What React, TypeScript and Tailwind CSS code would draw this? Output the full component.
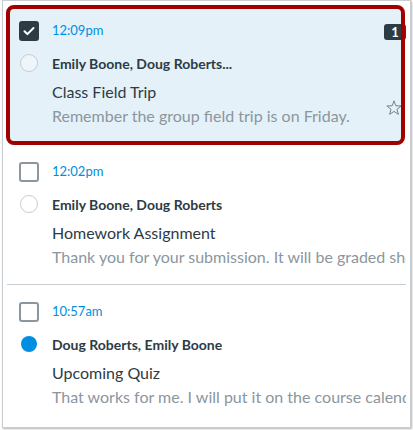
import React from "react";

type Msg = {
  time: string;
  names: string;
  subject: string;
  preview: string;
  checked?: boolean;
  unread?: boolean;
};

const messages: Msg[] = [
  {
    time: "12:09pm",
    names: "Emily Boone, Doug Roberts...",
    subject: "Class Field Trip",
    preview: "Remember the group field trip is on Friday.",
    checked: true,
  },
  {
    time: "12:02pm",
    names: "Emily Boone, Doug Roberts",
    subject: "Homework Assignment",
    preview: "Thank you for your submission. It will be graded shortly.",
  },
  {
    time: "10:57am",
    names: "Doug Roberts, Emily Boone",
    subject: "Upcoming Quiz",
    preview: "That works for me. I will put it on the course calendar.",
    unread: true,
  },
];

function Checkbox({ checked }: { checked?: boolean }) {
  if (checked) {
    return (
      <div className="w-[20px] h-[20px] rounded-[3px] bg-[#2d3b45] flex items-center justify-center">
        <svg width="14" height="14" viewBox="0 0 14 14">
          <path d="M2.5 7.2l2.9 2.9L11.5 4" fill="none" stroke="white" strokeWidth="2" strokeLinecap="round" strokeLinejoin="round" />
        </svg>
      </div>
    );
  }
  return <div className="w-[20px] h-[20px] rounded-[3px] border-2 border-[#8b969e] bg-white" />;
}

function Star() {
  return (
    <svg width="16" height="16" viewBox="0 0 16 16">
      <polygon
        points="8,0.8 9.82,5.79 15.13,5.98 10.95,9.26 12.41,14.37 8,11.4 3.59,14.37 5.05,9.26 0.87,5.98 6.18,5.79"
        fill="none"
        stroke="#73818c"
        strokeWidth="1"
        strokeLinejoin="round"
      />
    </svg>
  );
}

function MessageBody({ m }: { m: Msg }) {
  return (
    <div className="flex-1 min-w-0 flex flex-col">
      <div className="h-[20px] flex items-center">
        <div className="w-[20px] shrink-0">
          <Checkbox checked={m.checked} />
        </div>
        <span className="ml-[13px] text-[13px] text-[#008ee2]">{m.time}</span>
      </div>
      <div className="h-[20px] mt-[12px] flex items-center">
        <div className="w-[20px] shrink-0 flex justify-center">
          {m.unread ? (
            <div className="w-[16px] h-[16px] rounded-full bg-[#008ee2]" />
          ) : (
            <div className="w-[18px] h-[18px] rounded-full border border-[#c7cdd1] bg-white/40" />
          )}
        </div>
        <span className="ml-[13px] text-[14px] font-bold text-[#2d3b45] whitespace-nowrap">{m.names}</span>
      </div>
      <div className="pl-[33px] mt-[7px] text-[16px] leading-[24px] text-[#2d3b45] whitespace-nowrap">{m.subject}</div>
      <div className="pl-[33px] text-[16px] leading-[24px] text-[#8b969e] whitespace-nowrap">{m.preview}</div>
    </div>
  );
}

export default function App() {
  const [first, second, third] = messages;
  return (
    <div className="w-[413px] h-[430px] bg-white pl-[2px] font-['Lato','Noto_Sans',sans-serif]">
      <div className="w-[409px] h-[428px] border border-[#c7cdd1] bg-white shadow-[1px_1px_2px_rgba(0,0,0,0.3)] overflow-hidden flex flex-col">
        {/* selected message */}
        <div className="relative ml-[3px] mt-[4px] w-[399px] h-[140px] shrink-0 rounded-[8px] bg-[#e4f1f8] flex pl-[13px] pt-[16px]">
          <MessageBody m={first} />
          <div className="w-[22px] -mr-px pb-[12px] flex flex-col items-center justify-between">
            <div className="mt-[3px] w-[22px] h-[16px] rounded-[3px] bg-[#2d3b45] text-white text-[13px] font-bold leading-[16px] text-center">
              1
            </div>
            <div className="-ml-[2px] mb-[17px]">
              <Star />
            </div>
          </div>
          <div className="absolute inset-0 rounded-[8px] border-4 border-[#a00000] pointer-events-none" />
        </div>

        <div className="ml-[3px] w-[400px] h-[139px] shrink-0 overflow-hidden flex pl-[13px] pt-[17px]">
          <MessageBody m={second} />
        </div>
        <div className="ml-[4px] w-[399px] h-px shrink-0 bg-[#c7cdd1]" />

        <div className="ml-[3px] w-[400px] h-[140px] shrink-0 overflow-hidden flex pl-[13px] pt-[17px]">
          <MessageBody m={third} />
        </div>
      </div>
    </div>
  );
}
